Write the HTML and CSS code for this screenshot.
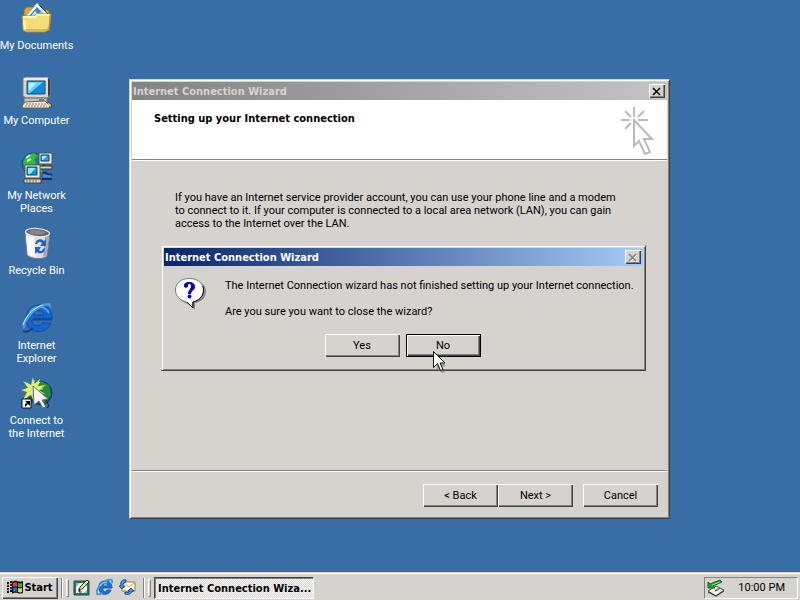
FILE: index.html
```html
<!DOCTYPE html>
<html lang="en">
<head>
<meta charset="utf-8">
<title>Desktop</title>
<link rel="stylesheet" href="styles.css">
</head>
<body>
<main class="desktop">
  <nav class="icons" aria-label="Desktop icons">
    <a class="shortcut" href="#">
      <svg viewBox="0 0 32 32" width="32" height="32" aria-hidden="true">
        <path d="M3 29V8l3-3h6l2 3h14v20z" fill="#d9ac38" stroke="#8b7028"/>
        <path d="M5 14 16 1l14 14-4 6H8z" fill="#f5f9ff" stroke="#8da2bc"/>
        <path d="m8 14 8-9 9 9z" fill="#4384c4"/>
        <path d="m10 14 4-5 3 3 3-2 4 4z" fill="#b9ecf4"/>
        <path d="M18 3 30 15l-2 3" fill="none" stroke="#2d3d55"/>
        <path d="M1 14h12l2-2h15l-2 16-4 2H5l-3-2z" fill="#f4dc77" stroke="#aa8631"/>
        <path d="M2 15h12l2-2h12M3 18l1 9" fill="none" stroke="#fff8b7" stroke-width="2"/>
        <path d="M5 28h20l3-2 1-12" fill="none" stroke="#bb963c"/>
      </svg>
      <span>My Documents</span>
    </a>
    <a class="shortcut" href="#">
      <svg viewBox="0 0 32 32" width="32" height="32" aria-hidden="true">
        <path d="m2 1 3-1h22l2 2v17l-3 2H5l-3-2z" fill="#d8d5cc" stroke="#817e76"/>
        <path d="M27 1v19l2-2V2z" fill="#414148"/>
        <path d="M3 2h23" stroke="#fff"/>
        <path d="M6 4h18v13H6z" fill="#1488dc" stroke="#224c78"/>
        <path d="M7 5h15L9 16H7z" fill="#62d4fa"/>
        <path d="M8 6h7l-6 7H8z" fill="#b5f4ff"/>
        <path d="M3 21h23v5H3z" fill="#c7c2b7" stroke="#706c65"/>
        <path d="M18 23h5" stroke="#333"/>
        <path d="m4 25 20-1 5 5-1 2H2l-1-2z" fill="#eee8d8" stroke="#6e6253"/>
        <path d="M5 27h20M4 29h22" stroke="#97836d" stroke-dasharray="2 1"/>
        <path d="m27 25 3 2 1 3h-3" fill="#d0c8b6" stroke="#413d3a"/>
      </svg>
      <span>My Computer</span>
    </a>
    <a class="shortcut" href="#">
      <svg viewBox="0 0 32 32" width="32" height="32" aria-hidden="true">
        <circle cx="12" cy="12" r="11" fill="#187d8e" stroke="#174978"/>
        <path d="m2 10 5-7 6-2 4 3-4 3 2 5-5 1-1 6-5-3zM15 14l6-2v8h-8z" fill="#37b842"/>
        <path d="M5 6 9 3M6 9l4-2" stroke="#b3f5a8" stroke-width="2"/>
        <path d="M18 1h13v11H18z" fill="#eee9da" stroke="#4e504d"/>
        <path d="M20 3h8v6h-8z" fill="#239ee5" stroke="#123e72"/>
        <path d="M21 4h5l-4 4h-1z" fill="#aaf4ff"/>
        <path d="M17 14h14v3H17z" fill="#d6d0c1" stroke="#333"/>
        <path d="M4 13h15v13H4z" fill="#eee9da" stroke="#5a5a54"/>
        <path d="M6 15h10v8H6z" fill="#158bdc" stroke="#12487e"/>
        <path d="M7 16h8l-6 6H7z" fill="#8cecff"/>
        <path d="M3 27h17v4H3z" fill="#ddd3bd" stroke="#423e39"/>
        <path d="M5 29h11" stroke="#796d60" stroke-dasharray="2 1"/>
        <path d="M21 27h10M22 21c4-3 5 5 9 1" fill="none" stroke="#102d68" stroke-width="2"/>
        <path d="M22 24h8" stroke="#77b4dc"/>
      </svg>
      <span>My Network<br>Places</span>
    </a>
    <a class="shortcut" href="#">
      <svg viewBox="0 0 32 32" width="32" height="32" aria-hidden="true">
        <path d="M4 5 6 28c3 4 16 5 20 1l3-24z" fill="#dfdfe5" stroke="#777786"/>
        <path d="m5 9 2 18c2 2 5 3 8 3L13 10z" fill="#fafafa"/>
        <path d="m24 9-2 21 4-2 2-20z" fill="#a7a7b5"/>
        <ellipse cx="16.5" cy="5.5" rx="12" ry="4" transform="rotate(5 16.5 5.5)" fill="#62646d" stroke="#f5f5f5" stroke-width="1"/>
        <path d="M7 5c4-3 14-3 18 1-5 3-15 2-18-1" fill="#85858a"/>
        <path d="M14 17c1-5 6-6 9-3l2-2v7h-6l2-3c-3-2-4-1-5 1zM24 21c0 5-5 7-8 4l-2 2v-7h6l-2 3c2 2 3 1 4-1z" fill="#245fd0"/>
      </svg>
      <span>Recycle Bin</span>
    </a>
    <a class="shortcut" href="#">
      <svg viewBox="0 0 32 32" width="32" height="32" aria-hidden="true">
        <path d="M30 21h-9c-3 5-10 3-10-3h20C32 8 26 3 19 3 10 3 5 9 5 17c0 15 20 17 25 4zM12 13c2-6 10-6 11 0z" fill="#1264d0" fill-rule="evenodd" stroke="#174c9e"/>
        <path d="M8 13c1-5 5-8 10-8 5 0 8 2 10 6" fill="none" stroke="#4aa5f2" stroke-width="2"/>
        <path d="M2 27C-1 19 12 4 25 1c5-1 6 1 4 6 0-3-2-4-4-3C15 6 4 18 4 26z" fill="#4a99df"/>
        <path d="M2 23C5 13 14 5 22 3" fill="none" stroke="#c9efff"/>
        <path d="M2 29c2 2 7 0 10-3" fill="none" stroke="#153c88" stroke-width="2"/>
        <path d="M12 17h18" stroke="#0b347b"/>
      </svg>
      <span>Internet<br>Explorer</span>
    </a>
    <a class="shortcut" href="#">
      <svg viewBox="0 0 32 32" width="32" height="32" aria-hidden="true">
        <circle cx="19" cy="16" r="12" fill="#164f91" stroke="#143761"/>
        <path d="m20 4 8 4 2 10-7 8-4-5 3-7-6-3z" fill="#228c38"/>
        <path d="m12 0 1 7 6-5-2 7 8-1-7 5 6 4-9-1-2 9-3-7-8 5 4-8-6-2 7-2-5-7 8 4z" fill="#e8ec43"/>
        <path d="M13 3v18M5 12h17M6 6l13 12M19 5 6 19" stroke="#c8ffe5"/>
        <path d="m12 9 15 13-6 1 4 7-3 1-4-7-5 4z" fill="#f6f8f8" stroke="#686d78"/>
        <path d="m25 23 3 6-2 2" fill="none" stroke="#18202e"/>
        <path d="M1 22h9v9H1z" fill="#fff" stroke="#111"/>
        <path d="M4 24h5v5l-2-2-3 3v-3l2-1z" fill="#000"/>
      </svg>
      <span>Connect to<br>the Internet</span>
    </a>
  </nav>

  <section class="window wizard" aria-labelledby="wizard-title">
    <header class="titlebar inactive">
      <h1 id="wizard-title">Internet Connection Wizard</h1>
      <button class="close" type="button" aria-label="Close wizard"><svg viewBox="0 0 10 9" width="10" height="9"><path d="m1 1 7 7m0-7L1 8" fill="none" stroke="currentColor" stroke-width="1.500"/></svg></button>
    </header>
    <div class="banner">
      <h2>Setting up your Internet connection</h2>
      <svg viewBox="0 0 36 50" width="36" height="50" aria-hidden="true">
        <path d="M14 1v10M1 14h9m8 0h10M5 5l6 6M24 5l-6 6M5 23l6-6" fill="none" stroke="#bbb" stroke-width="2"/>
        <path d="M14 14v26l5-5 6 13 5-2-6-13h8z" fill="#fff" stroke="#bbb" stroke-width="2"/>
      </svg>
    </div>
    <div class="page">
      <p>If you have an Internet service provider account, you can use your phone line and a modem<br>to connect to it. If your computer is connected to a local area network (LAN), you can gain<br>access to the Internet over the LAN.</p>
    </div>
    <footer class="actions">
      <button class="button" type="button">&lt; Back</button>
      <button class="button" type="button">Next &gt;</button>
      <button class="button cancel" type="button">Cancel</button>
    </footer>
  </section>

  <section class="window dialog" role="alertdialog" aria-labelledby="dialog-title">
    <header class="titlebar">
      <h2 id="dialog-title">Internet Connection Wizard</h2>
      <button class="close muted" type="button" aria-label="Close message"><svg viewBox="0 0 10 9" width="10" height="9"><path d="m2 2 7 7m0-7L2 9" fill="none" stroke="#fff"/><path d="m1 1 7 7m0-7L1 8" fill="none" stroke="currentColor" stroke-width="1.500"/></svg></button>
    </header>
    <div class="message">
      <svg viewBox="0 0 34 34" width="34" height="34" aria-hidden="true">
        <path d="M17 3C8 3 3 8 3 15c0 6 5 11 12 12l6 6v-7c7-1 11-6 11-12S26 3 17 3z" fill="#888"/>
        <path d="M15.500 1.500C7 1.500 1.500 6 1.500 13c0 6 4 10 11 12l6 6v-6c7-1 11-6 11-12s-5-11.500-14-11.500z" fill="#fff" stroke="#777"/>
        <path d="M29 9c2 8-2 14-10 16v6l-6-6" fill="none" stroke="#111"/>
        <path d="M10 9c0-3 2-4 5-4 4 0 6 2 6 5s-4 4-4 7h-3c0-4 3-5 3-8 0-2-2-3-3-1 1 3-4 4-4 1z" fill="#0707b8"/>
        <circle cx="15.500" cy="19.500" r="2" fill="#0707b8"/>
      </svg>
      <div class="question"><p>The Internet Connection wizard has not finished setting up your Internet connection.</p><p>Are you sure you want to close the wizard?</p></div>
    </div>
    <div class="choices">
      <button class="button" type="button">Yes</button>
      <button class="button default" type="button">No</button>
    </div>
  </section>
</main>

<footer class="taskbar">
  <button class="start" type="button">
    <svg viewBox="0 0 17 15" width="17" height="15" aria-hidden="true">
      <path d="M0 3h2m1-1h2M0 6h2m1-1h2M0 9h2m1-1h2M0 12h2m1-1h2" stroke="#111" stroke-width="2"/>
      <path d="M0 5h2m1-1h2" stroke="#d43a2c"/><path d="M0 10h2m1-1h2" stroke="#2465e8"/>
      <path d="M5 2c4-3 6 1 11-1v12c-4 2-7-2-11 1z" fill="#111"/>
      <path d="M6 3c2-1 3-1 4 0v4c-2-1-3-1-4 0z" fill="#ef3d2b"/>
      <path d="M11 3c2 1 3 0 4 0v4c-2 1-3 0-4 0z" fill="#2db83d"/>
      <path d="M6 8c2-1 3-1 4 0v4c-2-1-3-1-4 0z" fill="#2465e8"/>
      <path d="M11 8c2 1 3 0 4 0v4c-2 1-3 0-4 0z" fill="#f5d735"/>
    </svg>
    Start
  </button>
  <span class="rule"></span><span class="grip"></span>
  <nav class="quick" aria-label="Quick launch">
    <button type="button" aria-label="Show desktop"><svg viewBox="0 0 17 17" width="17" height="17"><path d="M1 2h15v14H1z" fill="#24766c" stroke="#234d49"/><path d="M3 4h9l2 3v7H3z" fill="#fff"/><path d="M3 4h4L3 8m11 3v3h-4" fill="#85c7aa"/><path d="m6 12 1-4 7-7 2 2-7 7z" fill="#eee7a1" stroke="#252b27"/><path d="M6 10v3h3" fill="none" stroke="#222"/></svg></button>
    <button type="button" aria-label="Internet Explorer"><svg viewBox="0 0 17 17" width="17" height="17"><path d="M15 11h-4c-2 3-5 1-4-2h9c0-5-3-7-7-7-5 0-7 4-6 8 1 7 10 7 12 1zM7 7c0-3 5-3 5 0z" fill="#1875d6" fill-rule="evenodd" stroke="#1755b6"/><path d="M1 15C-1 10 7 3 12 1c3-1 5 0 4 3M1 15c1 1 3 0 5-1" fill="none" stroke="#379ce7" stroke-width="2"/><path d="M4 7c1-3 4-4 7-3" fill="none" stroke="#a6e7ff"/></svg></button>
    <button type="button" aria-label="Outlook Express"><svg viewBox="0 0 17 17" width="17" height="17"><path d="M3 3h13v9H3z" fill="#fffbe6" stroke="#9b812e"/><path d="m5 4 5 4 5-4" fill="none" stroke="#c9a649"/><path d="M7 1C3 0 1 3 2 7H0l3 3 3-3H4c0-3 1-4 3-4z" fill="#4e9ae8" stroke="#174890"/><path d="M6 15c4 1 6 0 7-3h2l-3-3-3 3h2c-1 1-2 2-5 1z" fill="#4e9ae8" stroke="#174890"/></svg></button>
  </nav>
  <span class="rule"></span><span class="grip"></span>
  <button class="task" type="button">Internet Connection Wiza...</button>
  <div class="tray">
    <svg viewBox="0 0 18 18" width="18" height="18" aria-label="Safely remove hardware" role="img"><path d="m1 12 8-5 8 4-8 6z" fill="#eee" stroke="#555"/><path d="m1 13 8 4 8-5" fill="none" stroke="#222"/><path d="m8 12 5-3" stroke="#777" stroke-width="2"/><path d="M1 9V3l2 2 10-4 2 2-9 4 2 2z" fill="#17a82b" stroke="#15621e"/><path d="m5 6 8-3" stroke="#8ee881"/></svg>
    <time datetime="22:00">10:00 PM</time>
  </div>
</footer>

<svg class="pointer" viewBox="0 0 14 22" width="14" height="22" aria-hidden="true"><path d="m3 4 10 11-4 1 3 5-3 1-5-4z" fill="#777" opacity=".6"/><path d="M.5.500v16l4-4 3 7 2.500-1-3-6.500H12z" fill="#fff" stroke="#111"/></svg>
</body>
</html>
```
FILE: styles.css
```css
* {
  box-sizing: border-box;
}

:root {
  --face: #d6d3ce;
  --light: #fff;
  --shade: #848284;
  --dark: #424142;
  --bold-font: "DejaVu Sans Condensed", Tahoma, "DejaVu Sans", sans-serif;
}

body {
  margin: 0;
  min-height: 100vh;
  display: flex;
  flex-direction: column;
  overflow: hidden;
  background: #396da5;
  color: #000;
  font: 11px/13px Roboto, Tahoma, "DejaVu Sans", sans-serif;
}

h1, h2, p {
  margin: 0;
  font-size: inherit;
  white-space: nowrap;
}

h1, h2 {
  font-family: var(--bold-font);
}

button {
  margin: 0;
  padding: 0;
  border: 0;
  background: var(--face);
  color: inherit;
  font: inherit;
}

svg {
  display: block;
  flex: none;
}

.desktop {
  position: relative;
  flex: 1;
}

.icons {
  display: grid;
  grid-template-columns: 100%;
  grid-auto-rows: 75px;
  width: 73px;
  padding-top: 2px;
}

.shortcut {
  display: flex;
  flex-direction: column;
  align-items: center;
  gap: 5px;
  color: #fff;
  text-align: center;
  text-decoration: none;
  white-space: nowrap;
}

.window {
  position: absolute;
  display: flex;
  flex-direction: column;
  padding: 2px;
  border: 1px solid;
  border-color: var(--face) var(--dark) var(--dark) var(--face);
  background: var(--face);
  box-shadow: inset 1px 1px var(--light), inset -1px -1px var(--shade);
}

.wizard {
  left: 129px;
  top: 79px;
  width: 541px;
  min-height: 440px;
}

.dialog {
  left: 161px;
  top: 245px;
  width: 485px;
  min-height: 126px;
}

.titlebar {
  display: flex;
  align-items: center;
  justify-content: space-between;
  height: 18px;
  padding: 0 1px;
  background: linear-gradient(90deg, #08246b, #a5cbf7);
  color: #fff;
  font-weight: bold;
}

.titlebar.inactive {
  background: linear-gradient(90deg, #848284, #c6c3c6);
  color: #d6d3ce;
}

.close {
  display: grid;
  place-items: center;
  width: 16px;
  height: 14px;
  margin-right: 1px;
  box-shadow: inset 1px 1px var(--light), inset -1px -1px var(--dark), inset -2px -2px var(--shade);
  color: #000;
}

.close.muted {
  color: #848284;
}

.banner {
  display: flex;
  justify-content: space-between;
  height: 60px;
  padding: 6px 11px 0 22px;
  border-bottom: 1px solid var(--shade);
  box-shadow: 0 1px var(--light);
  background: #fff;
}

.banner h2 {
  padding-top: 6px;
}

.page {
  flex: 1;
  padding: 31px 43px;
}

.actions {
  display: flex;
  justify-content: flex-end;
  height: 46px;
  padding: 13px 9px 10px;
  border-top: 1px solid var(--shade);
  box-shadow: inset 0 1px var(--light);
}

.button {
  width: 75px;
  height: 23px;
  box-shadow: inset 1px 1px var(--light), inset -1px -1px var(--dark), inset -2px -2px var(--shade);
}

.button.cancel {
  margin-left: 10px;
}

.button.default {
  border: 1px solid #000;
}

.message {
  display: flex;
  gap: 17px;
  padding: 11px 10px 0 10px;
}

.question {
  display: grid;
  gap: 13px;
  align-content: start;
  padding-top: 2px;
}

.choices {
  display: flex;
  justify-content: center;
  gap: 6px;
  padding: 16px 2px 0 0;
}

.taskbar {
  display: flex;
  align-items: center;
  gap: 3px;
  height: 28px;
  padding: 3px 2px 1px;
  border-top: 1px solid var(--face);
  box-shadow: inset 0 1px var(--light);
  background: var(--face);
}

.start {
  display: flex;
  align-items: center;
  justify-content: center;
  width: 56px;
  height: 22px;
  box-shadow: inset 1px 1px var(--light), inset -1px -1px var(--dark), inset -2px -2px var(--shade);
  font-family: var(--bold-font);
  font-weight: bold;
}

.rule {
  width: 2px;
  height: 20px;
  border-left: 1px solid var(--shade);
  border-right: 1px solid var(--light);
}

.grip {
  width: 3px;
  height: 18px;
  border: 1px solid;
  border-color: var(--light) var(--shade) var(--shade) var(--light);
}

.quick {
  display: flex;
  gap: 6px;
  padding: 0 4px 0 1px;
}

.task {
  width: 160px;
  height: 22px;
  padding: 1px 3px 0;
  overflow: hidden;
  border: 1px solid;
  border-color: var(--dark) var(--light) var(--light) var(--dark);
  box-shadow: inset 1px 1px var(--shade);
  background: repeating-conic-gradient(#fff 0 25%, #d6d3ce 0 50%) 0 0 / 2px 2px;
  font-family: var(--bold-font);
  font-weight: bold;
  text-align: left;
  white-space: nowrap;
}

.tray {
  display: flex;
  align-items: center;
  justify-content: space-between;
  width: 94px;
  height: 22px;
  margin-left: auto;
  padding: 0 12px 0 2px;
  border: 1px solid;
  border-color: var(--shade) var(--light) var(--light) var(--shade);
  white-space: nowrap;
}

.pointer {
  position: absolute;
  left: 433px;
  top: 351px;
}
```
